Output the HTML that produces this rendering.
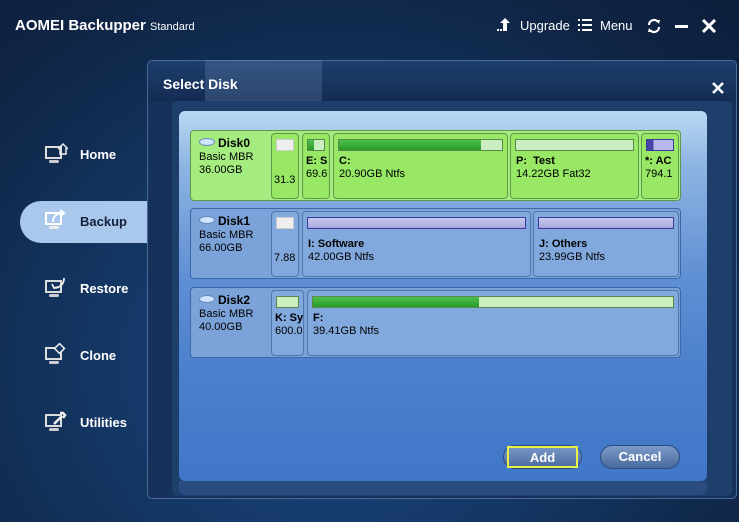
<!DOCTYPE html>
<html><head><meta charset="utf-8"><style>
*{margin:0;padding:0;box-sizing:border-box}
body{width:739px;height:522px;overflow:hidden;font-family:"Liberation Sans",sans-serif;background:radial-gradient(ellipse at 45% 70%,#1b4a86 0%,#143764 40%,#0f2444 80%,#0d1f3b 100%);position:relative;color:#fff}
.a{position:absolute}
.title{left:15px;top:17px;font-size:15px;font-weight:bold}
.title span{font-size:11px;font-weight:normal}
.top{top:18px;font-size:13px}
.nav{left:80px;font-size:13px;font-weight:bold}
.ico{left:44px;width:24px;height:24px}
.dlg{left:147px;top:60px;width:590px;height:439px;border:1px solid #4a6a96;border-radius:5px;background:#16325c}
.inner{left:172px;top:101px;width:560px;height:395px;background:#1e3e6c;border-radius:6px}
.panel{left:179px;top:111px;width:528px;height:370px;border-radius:6px;background:linear-gradient(#b9d9f3 0%,#8db4e2 15%,#5f8fd4 45%,#4c80cc 70%,#4077c8 100%)}
.disk{left:190px;width:491px;border-radius:4px;border:1px solid #3c68a8;background:#7ba3d9}
.d0{background:#a4ec80;border-color:#5f9a4a}
.dn{left:8px;top:6px;font-size:11px;color:#000;line-height:13px}
.dn b{font-size:12px}
.pt{top:2px;border-radius:4px;border:1px solid #4f77ac;background:#82a9dd;color:#000;font-size:11px;overflow:hidden;white-space:nowrap;line-height:13px}
.d0 .pt{background:#98e866;border-color:#5f9a4a}
.bar{position:absolute;left:4px;right:4px;top:5px;height:12px;border:1px solid #5a8a4a;background:#cbeec0}
.bar i{display:block;height:100%;background:linear-gradient(#4bc04b,#2a9a2a)}
.pb{background:linear-gradient(#c8c8f0,#a8a8e0);border-color:#3a3a9a}
.tx{position:absolute;left:5px;top:21px}
.btn{top:445px;height:24px;border-radius:12px;background:linear-gradient(#7a9ac8,#4a6a9e);border:1px solid #2c4a7a;font-size:13px;font-weight:bold;text-align:center;line-height:22px}
.dk{display:inline-block;width:16px;height:8px;background:#cfe4ff;border:1px solid #6a8ab8;border-radius:50%;margin-right:3px;vertical-align:1px}
</style></head><body>
<div class="a title">AOMEI Backupper <span>Standard</span></div>
<svg class="a" style="left:497px;top:17px" width="16" height="16" viewBox="0 0 16 16"><path d="M8 1l-5 5h3v8h4V6h3z" fill="#fff"/><rect x="0" y="12" width="2" height="2" fill="#fff"/><rect x="3" y="12" width="2" height="2" fill="#fff"/></svg>
<div class="a top" style="left:520px">Upgrade</div>
<svg class="a" style="left:578px;top:19px" width="14" height="12" viewBox="0 0 14 12"><g fill="#fff"><rect x="0" y="0" width="2" height="2"/><rect x="0" y="5" width="2" height="2"/><rect x="0" y="10" width="2" height="2"/><rect x="4" y="0" width="10" height="2"/><rect x="4" y="5" width="10" height="2"/><rect x="4" y="10" width="10" height="2"/></g></svg>
<div class="a top" style="left:600px">Menu</div>
<svg class="a" style="left:646px;top:18px" width="16" height="16" viewBox="0 0 16 16"><path d="M3 7a5 5 0 0 1 9-3M13 9a5 5 0 0 1-9 3" fill="none" stroke="#fff" stroke-width="2.2"/><path d="M10 2l4 0-1 4zM6 14l-4 0 1-4z" fill="#fff"/></svg>
<div class="a" style="left:675px;top:25px;width:13px;height:3px;background:#fff"></div>
<svg class="a" style="left:702px;top:19px" width="14" height="14" viewBox="0 0 14 14"><path d="M1 1l12 12M13 1L1 13" stroke="#fff" stroke-width="3"/></svg>

<div class="a" style="left:20px;top:201px;width:140px;height:42px;border-radius:21px 0 0 21px;background:#a9c8ec"></div>
<svg class="a ico" style="top:142px" viewBox="0 0 24 24"><rect x="2" y="5" width="15" height="11" fill="none" stroke="#ddd" stroke-width="2"/><rect x="5" y="18" width="10" height="3" rx="1.5" fill="#ccc"/><path d="M14 7l5-5 5 5M16 6v6h6V6" fill="none" stroke="#eee" stroke-width="1.5"/></svg>
<div class="a nav" style="top:147px">Home</div>
<svg class="a ico" style="top:208px" viewBox="0 0 24 24"><rect x="2" y="5" width="15" height="11" fill="none" stroke="#fff" stroke-width="2"/><rect x="5" y="18" width="10" height="3" rx="1.5" fill="#eee"/><path d="M9 14c0-6 4-9 10-9M16 2l4 3-4 3" fill="none" stroke="#fff" stroke-width="2"/></svg>
<div class="a nav" style="top:214px;color:#12203a">Backup</div>
<svg class="a ico" style="top:276px" viewBox="0 0 24 24"><rect x="2" y="5" width="15" height="11" fill="none" stroke="#ddd" stroke-width="2"/><rect x="5" y="18" width="10" height="3" rx="1.5" fill="#ccc"/><path d="M20 2c0 6-4 10-10 10M8 8l2 4 4-1" fill="none" stroke="#eee" stroke-width="1.8"/></svg>
<div class="a nav" style="top:281px">Restore</div>
<svg class="a ico" style="top:343px" viewBox="0 0 24 24"><rect x="2" y="5" width="15" height="11" fill="none" stroke="#ddd" stroke-width="2"/><rect x="5" y="18" width="10" height="3" rx="1.5" fill="#ccc"/><rect x="12" y="2" width="7" height="7" transform="rotate(45 15.5 5.5)" fill="#1a3a66" stroke="#eee" stroke-width="1.5"/></svg>
<div class="a nav" style="top:348px">Clone</div>
<svg class="a ico" style="top:410px" viewBox="0 0 24 24"><rect x="2" y="5" width="15" height="11" fill="none" stroke="#ddd" stroke-width="2"/><rect x="5" y="18" width="10" height="3" rx="1.5" fill="#ccc"/><path d="M10 14l8-8M16 3l3 0 2 2-2 3" fill="none" stroke="#eee" stroke-width="2.5"/></svg>
<div class="a nav" style="top:415px">Utilities</div>

<div class="a dlg"></div>
<div class="a" style="left:148px;top:61px;width:588px;height:40px;background:linear-gradient(#1e3e6e,#142c52);border-radius:5px 5px 0 0"></div>
<div class="a" style="left:205px;top:60px;width:117px;height:50px;background:rgba(120,150,190,0.25)"></div>
<div class="a" style="left:163px;top:76px;font-size:14px;font-weight:bold">Select Disk</div>
<svg class="a" style="left:712px;top:82px" width="12" height="12" viewBox="0 0 12 12"><path d="M1 1l10 10M11 1L1 11" stroke="#fff" stroke-width="2.6"/></svg>
<div class="a inner"></div>
<div class="a panel"></div>
<div class="a" style="left:179px;top:481px;width:528px;height:14px;background:#2a4c80;border-radius:0 0 6px 6px"></div>

<div class="a disk d0" style="top:130px;height:71px">
 <div class="a dn"><b><span class="dk"></span>Disk0</b><br>Basic MBR<br>36.00GB</div>
 <div class="a pt" style="left:80px;width:28px;height:66px"><div class="bar" style="background:#eee;border-color:#ccc"></div><div class="tx" style="top:40px;left:2px">31.3</div></div>
 <div class="a pt" style="left:111px;width:28px;height:66px"><div class="bar"><i style="width:40%"></i></div><div class="tx" style="left:3px"><b>E: S</b><br>69.6</div></div>
 <div class="a pt" style="left:142px;width:175px;height:66px"><div class="bar"><i style="width:87%"></i></div><div class="tx"><b>C:</b><br>20.90GB Ntfs</div></div>
 <div class="a pt" style="left:319px;width:129px;height:66px"><div class="bar"></div><div class="tx"><b>P: &nbsp;Test</b><br>14.22GB Fat32</div></div>
 <div class="a pt" style="left:450px;width:38px;height:66px"><div class="bar pb" style="background:linear-gradient(90deg,#4444aa 25%,#b8b8ea 25%)"></div><div class="tx" style="left:3px"><b>*: AC</b><br>794.1</div></div>
</div>
<div class="a disk" style="top:208px;height:71px">
 <div class="a dn"><b><span class="dk"></span>Disk1</b><br>Basic MBR<br>66.00GB</div>
 <div class="a pt" style="left:80px;width:28px;height:66px"><div class="bar" style="background:#eee;border-color:#ccc"></div><div class="tx" style="top:40px;left:2px">7.88</div></div>
 <div class="a pt" style="left:111px;width:229px;height:66px"><div class="bar pb"></div><div class="tx" style="top:26px"><b>I: Software</b><br>42.00GB Ntfs</div></div>
 <div class="a pt" style="left:342px;width:146px;height:66px"><div class="bar pb"></div><div class="tx" style="top:26px"><b>J: Others</b><br>23.99GB Ntfs</div></div>
</div>
<div class="a disk" style="top:287px;height:71px">
 <div class="a dn"><b><span class="dk"></span>Disk2</b><br>Basic MBR<br>40.00GB</div>
 <div class="a pt" style="left:80px;width:33px;height:66px"><div class="bar"></div><div class="tx" style="left:3px"><b>K: Sy</b><br>600.0</div></div>
 <div class="a pt" style="left:116px;width:372px;height:66px"><div class="bar"><i style="width:46%"></i></div><div class="tx"><b>F:</b><br>39.41GB Ntfs</div></div>
</div>

<div class="a btn" style="left:503px;width:79px"><div style="position:absolute;left:3px;top:0;right:3px;bottom:0;border:2px solid #e8f04a;line-height:19px">Add</div></div>
<div class="a btn" style="left:600px;width:80px">Cancel</div>
</body></html>
